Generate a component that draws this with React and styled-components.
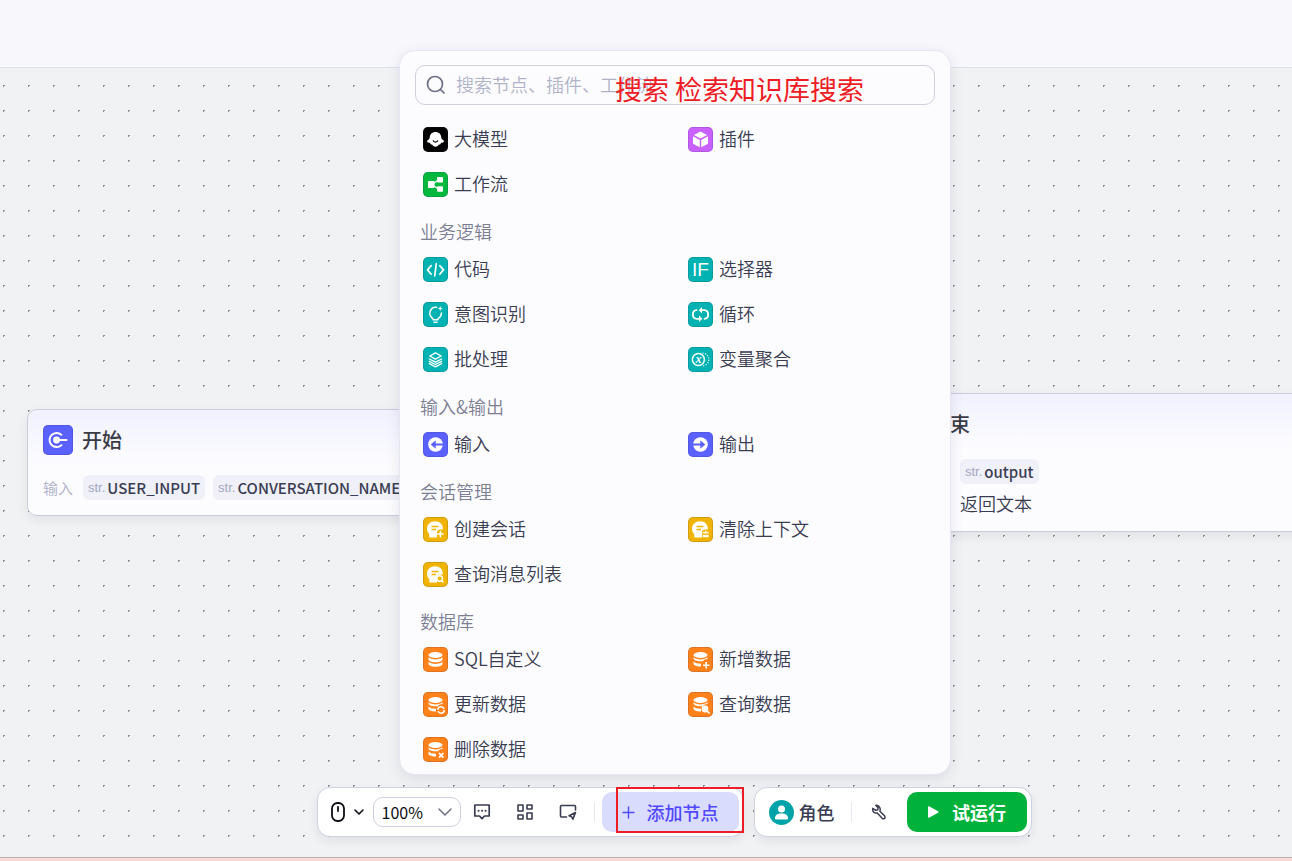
import React from 'react';
import styled, { createGlobalStyle } from 'styled-components';

const GlobalStyle = createGlobalStyle`
  * {
    box-sizing: border-box;
  }

  body {
    margin: 0;
    font-family: 'Noto Sans CJK SC', 'Noto Sans', sans-serif;
    color: #3a3d52;
  }

  button,
  input,
  select {
    font: inherit;
    color: inherit;
  }

  button {
    border: none;
    background: none;
    padding: 0;
    cursor: pointer;
  }
`;

const Page = styled.div`
  display: flex;
  flex-direction: column;
  min-height: 100vh;
`;

const Header = styled.header`
  height: 68px;
  background: #f7f7fc;
  border-bottom: 1px solid #dfe0ea;
`;

const Workspace = styled.main`
  position: relative;
  display: flex;
  flex: 1;
`;

const Canvas = styled.section`
  position: relative;
  flex: 1;
  overflow: hidden;
  background-color: #f1f2f4;
  background-image: radial-gradient(circle, #8c8f99 1px, transparent 1px);
  background-size: 25px 25px;
  background-position: -9px 5px;
`;

const BottomStrip = styled.footer`
  height: 4px;
  background: #f9d9d5;
  border-top: 1px solid #b9b3b5;
`;

const NodeCard = styled.article`
  position: absolute;
  left: ${(props) => props.$x}px;
  top: ${(props) => props.$y}px;
  width: 560px;
  padding: 15px;
  border: 1px solid #cbcddd;
  border-radius: 10px;
  background: linear-gradient(#f1f1ff, #fcfcff 54px);
  box-shadow: 0 4px 12px rgba(30, 35, 60, 0.08);
`;

const NodeTitle = styled.div`
  display: flex;
  align-items: center;
  gap: 9px;
  height: 30px;
  margin-bottom: 20px;

  h3 {
    margin: 0;
    font-size: 20px;
    font-weight: 500;
    line-height: 30px;
    color: #3a3b46;
  }
`;

const NodeRow = styled.div`
  display: flex;
  align-items: center;
  gap: 8px;
  height: 25px;
  padding-left: ${(props) => (props.$indent ? '69px' : '0')};
`;

const NodeLabel = styled.span`
  width: 32px;
  font-size: 15px;
  color: #b3b5ca;
`;

const Tag = styled.span`
  display: flex;
  align-items: center;
  gap: 2px;
  height: 25px;
  padding: 0 5px;
  border-radius: 6px;
  background: #f0f0f8;
  font-size: 15px;
  font-weight: 500;
  white-space: nowrap;

  small {
    font-family: 'Liberation Sans', sans-serif;
    font-size: 13px;
    font-weight: 400;
    color: #a3a6c0;
  }
`;

const NodeText = styled.p`
  margin: 6px 0 0;
  padding-left: 69px;
  font-size: 18px;
  font-weight: 350;
  line-height: 26px;
`;

const Dock = styled.div`
  position: absolute;
  right: 0;
  bottom: 20px;
  left: 0;
  display: flex;
  flex-direction: column;
  align-items: center;
  gap: 12px;
  padding-left: 58px;
`;

const Popover = styled.div`
  width: 552px;
  padding: 14px 0 2px;
  border: 1px solid #e6e7f2;
  border-radius: 16px;
  background: #fcfcff;
  box-shadow: 0 4px 14px rgba(30, 35, 60, 0.1);
`;

const SearchBox = styled.label`
  position: relative;
  display: flex;
  align-items: center;
  gap: 10px;
  height: 40px;
  margin: 0 15px 12px;
  padding: 0 10px;
  border: 1px solid #cdd0df;
  border-radius: 10px;

  input {
    flex: 1;
    min-width: 0;
    padding: 0 0 2px;
    border: none;
    outline: none;
    background: transparent;
    font-size: 18px;
    font-weight: 350;
    line-height: 28px;
  }

  input::placeholder {
    color: #b0b3c8;
    opacity: 1;
  }
`;

const NoteText = styled.span`
  position: absolute;
  left: 199px;
  top: 3px;
  font-size: 27px;
  line-height: 40px;
  white-space: nowrap;
  color: #ee1c24;
  pointer-events: none;
`;

const NoteFrame = styled.span`
  position: absolute;
  top: -5px;
  right: -5px;
  bottom: -1px;
  left: 14px;
  border: 2px solid #ee1c24;
  pointer-events: none;
`;

const GroupTitle = styled.h4`
  margin: 0;
  padding: 10px 0 2px 20px;
  font-size: 18px;
  font-weight: 350;
  line-height: 28px;
  color: #7c7f94;
`;

const ItemGrid = styled.div`
  display: grid;
  grid-template-columns: 265px 1fr;
  padding-left: 20px;
`;

const Item = styled.button`
  display: flex;
  align-items: center;
  gap: 6px;
  height: 45px;
  padding-left: 3px;
  font-size: 18px;
  font-weight: 350;
  line-height: 28px;
`;

const ItemName = styled.span`
  padding-bottom: 3px;
`;

const IconTile = styled.span`
  display: flex;
  flex: none;
  width: ${(props) => props.$size || 25}px;
  height: ${(props) => props.$size || 25}px;
  border-radius: 5px;
  background: ${(props) => props.$color};
  box-shadow: inset 0 0 0 1px rgba(40, 40, 80, 0.16);
`;

const Toolbars = styled.div`
  display: flex;
  gap: 10px;
  padding-right: 2px;
`;

const Toolbar = styled.div`
  display: flex;
  align-items: center;
  height: 50px;
  padding: 4px;
  border: 1px solid #cfd1e3;
  border-radius: 13px;
  background: #fff;
  box-shadow: 0 4px 10px rgba(30, 35, 60, 0.08);
`;

const MouseButton = styled.button`
  display: flex;
  align-items: center;
  gap: 8px;
  width: 51px;
  height: 30px;
  padding-left: 9px;
  color: #0c0d14;
`;

const ZoomField = styled.span`
  display: grid;
  align-items: center;
  width: 88px;
  height: 30px;

  select,
  svg {
    grid-area: 1 / 1;
  }

  select {
    width: 100%;
    height: 30px;
    padding: 0 8px;
    border: 1px solid #cdd0e0;
    border-radius: 10px;
    appearance: none;
    background: #fff;
    font-size: 16px;
    color: #0c0d14;
  }

  svg {
    justify-self: end;
    margin-right: 8px;
    pointer-events: none;
  }
`;

const ToolButton = styled.button`
  display: flex;
  align-items: center;
  justify-content: center;
  width: ${(props) => props.$width || 43}px;
  height: 30px;
`;

const Divider = styled.span`
  width: 1px;
  height: 20px;
  margin: ${(props) => (props.$spaced ? '0 7px 0 4px' : '0')};
  background: #e8e9f2;
`;

const AddButton = styled.button`
  position: relative;
  display: flex;
  align-items: center;
  justify-content: center;
  gap: 12px;
  width: 137px;
  height: 40px;
  border-radius: 10px;
  background: #d9dcfc;
  font-size: 18px;
  font-weight: 500;
  color: #5147ff;
`;

const RoleButton = styled.button`
  display: flex;
  align-items: center;
  gap: 5px;
  width: 82px;
  height: 40px;
  margin-left: 10px;
  font-size: 18px;
  font-weight: 500;
`;

const RunButton = styled.button`
  display: flex;
  align-items: center;
  justify-content: center;
  gap: 13px;
  width: 120px;
  height: 40px;
  border-radius: 10px;
  background: #00b23c;
  font-size: 18px;
  font-weight: 700;
  color: #fff;
`;

const chatHead = (
  <path
    fill="#fff"
    d="M12 4.300c4.600 0 7.800 3 7.800 7v1.200h-2.600a3.200 3.200 0 0 0-3.200 3.200V20.500H6.300v-3.400C4.700 15.800 4 13.900 4 11.800 4 7.500 7.400 4.300 12 4.300z"
  />
);

const chatLines = <path d="M8.500 9.500h7M8.500 12.500h4.500" stroke="#f0b400" strokeWidth="1.300" />;

const fullStack = (
  <g fill="#fff">
    <ellipse cx="12.500" cy="8" rx="7" ry="3" />
    <path d="M5.500 10.300c1.500 1.500 4 2.100 7 2.100s5.500-.6 7-2.100v1.900c0 1.700-3.100 3-7 3s-7-1.300-7-3z" />
    <path d="M5.500 14.800c1.500 1.500 4 2.100 7 2.100s5.500-.6 7-2.100v2c0 1.700-3.100 3-7 3s-7-1.300-7-3z" />
  </g>
);

const partStack = (
  <g fill="#fff">
    <ellipse cx="12.500" cy="8" rx="7" ry="3" />
    <path d="M5.500 10.300c1.500 1.500 4 2.100 7 2.100s5.500-.6 7-2.100v1.700c-2 0-3.500.8-4.600 2.200-.8.100-1.600.1-2.400.1-3.900 0-7-1.300-7-3z" />
    <path d="M5.500 14.500c1.500 1.500 4 2.200 7.500 2.200v2.800c-4.300.1-7.500-1.200-7.500-2.800z" />
  </g>
);

const glyphs = {
  llm: (
    <>
      <path
        fill="#fff"
        d="M12.500 5c3.500 0 5.700 2.200 5.900 6.200.1 1 2.500 1.700 2.500 3 0 1.200-1.300 1.500-2.800 1.500-.3 1.300-1 1.900-2.200 1.900-.5 1.200-1.700 2.100-3.400 2.100s-2.900-.9-3.400-2.100c-1.200 0-1.900-.6-2.200-1.900-1.500 0-2.800-.3-2.800-1.500 0-1.300 2.400-2 2.500-3C6.800 7.200 9 5 12.500 5z"
      />
      <path d="M10 13.400c.7 2.300 4.300 2.300 5 0" fill="none" stroke="#000" strokeWidth="1.100" />
    </>
  ),
  plugin: (
    <g fill="#fff">
      <path d="M12.500 4.600l6.600 3.300-6.600 3.600-6.600-3.600z" />
      <path d="M5 9.300l6.800 3.700v7.300L5.900 17.300a1.500 1.500 0 0 1-.9-1.400z" />
      <path d="M20 9.300L13.200 13v7.300l5.900-3a1.500 1.500 0 0 0 .9-1.400z" />
    </g>
  ),
  workflow: (
    <>
      <path d="M9 12.500l7-5M9 12.500l7 5" stroke="#fff" strokeWidth="1.300" />
      <rect x="5" y="9" width="6.500" height="7" rx="1" fill="#fff" />
      <rect x="14" y="5" width="6" height="5.500" rx="1" fill="#fff" />
      <rect x="14" y="14.200" width="6" height="5.500" rx="1" fill="#fff" />
    </>
  ),
  code: (
    <path
      d="M8.200 8.600L4.500 12.900l3.700 4.300M16.800 8.600l3.700 4.300-3.700 4.300M13.300 6.500l-1.600 12.500"
      fill="none"
      stroke="#fff"
      strokeWidth="1.700"
      strokeLinecap="round"
      strokeLinejoin="round"
    />
  ),
  condition: (
    <text
      x="12.500"
      y="19"
      textAnchor="middle"
      fontFamily="Liberation Sans"
      fontWeight="400"
      fontSize="19"
      fill="#fff"
    >
      IF
    </text>
  ),
  intent: (
    <g fill="none" stroke="#fff" strokeWidth="1.500" strokeLinecap="round">
      <path d="M13.500 5.300A6 6 0 0 0 9.300 16.100c.7.700 1 1.100 1 1.700h4.400c0-.6.300-1 1-1.700A6 6 0 0 0 18.400 11" />
      <path d="M11 20.300h3" />
      <path d="M17.200 4l.7 1.800 1.800.7-1.800.7-.7 1.800-.7-1.800-1.800-.7 1.800-.7z" fill="#fff" stroke="none" />
    </g>
  ),
  loop: (
    <>
      <g fill="none" stroke="#fff" strokeWidth="1.800" strokeLinecap="round">
        <path d="M8.500 8.200C3.600 8.400 3.600 16.500 8.700 16.800H12" />
        <path d="M16.500 16.800c4.900-.2 4.900-8.300-.2-8.600H13" />
      </g>
      <path d="M14 5v6.400L10.700 8.200zM11 13.600V20l3.300-3.200z" fill="#fff" />
    </>
  ),
  batch: (
    <g fill="none" stroke="#fff" strokeWidth="1.400" strokeLinejoin="round" strokeLinecap="round">
      <path d="M12.500 5.800l5.700 3.200-5.700 3.200-5.700-3.200z" />
      <path d="M6.400 12l6.100 3.200 6.100-3.200M6.400 14.300l6.100 3.200 6.100-3.200M6.400 16.600l6.100 3.200 6.100-3.200" />
    </g>
  ),
  merge: (
    <>
      <circle cx="10.400" cy="12.500" r="6" fill="none" stroke="#fff" strokeWidth="1.500" />
      <path
        d="M14.500 6.200a6.300 6.300 0 0 1 0 12.600"
        fill="none"
        stroke="#fff"
        strokeWidth="1.300"
        strokeDasharray="1 1.500"
      />
      <text
        x="10.400"
        y="15.500"
        textAnchor="middle"
        fontFamily="Liberation Serif"
        fontStyle="italic"
        fontWeight="700"
        fontSize="12"
        fill="#fff"
      >
        x
      </text>
    </>
  ),
  input: (
    <>
      <circle cx="12.500" cy="12.500" r="7.300" fill="#fff" />
      <path d="M7.700 12.500l5-4.200v3.300H20v1.800h-7.300v3.300z" fill="#5b61ff" />
    </>
  ),
  output: (
    <>
      <circle cx="12.500" cy="12.500" r="7.300" fill="#fff" />
      <path d="M17.300 12.500l-5-4.200v3.300H5v1.800h7.300v3.300z" fill="#5b61ff" />
    </>
  ),
  chatAdd: (
    <>
      {chatHead}
      {chatLines}
      <path d="M17.400 13.800v6.600M14.100 17.100h6.600" stroke="#f0b400" strokeWidth="3.400" />
      <path d="M17.400 13.800v6.600M14.100 17.100h6.600" stroke="#fff" strokeWidth="1.500" />
    </>
  ),
  chatClear: (
    <>
      {chatHead}
      {chatLines}
      <path d="M17 12.800h1.500v2H21v2h-6.600v-2H17zM14.400 17.600H21v3h-6.600z" fill="#fff" stroke="#f0b400" strokeWidth=".6" />
    </>
  ),
  chatSearch: (
    <>
      {chatHead}
      {chatLines}
      <circle cx="16.700" cy="16.500" r="2.800" fill="#f0b400" stroke="#fff" strokeWidth="1.400" />
      <path d="M18.800 18.700l1.700 1.700" stroke="#fff" strokeWidth="1.500" />
    </>
  ),
  db: fullStack,
  dbAdd: (
    <>
      {partStack}
      <path d="M18.200 15v6.500M15 18.200h6.500" stroke="#fff" strokeWidth="1.600" />
    </>
  ),
  dbUpdate: (
    <>
      {partStack}
      <circle
        cx="18"
        cy="18"
        r="3.200"
        fill="#ff811a"
        stroke="#fff"
        strokeWidth="1.500"
        strokeDasharray="8.500 1.500"
      />
    </>
  ),
  dbSearch: (
    <>
      {partStack}
      <circle cx="17" cy="17" r="3.400" fill="#fff" />
      <path d="M19 19l2 2" stroke="#fff" strokeWidth="1.700" strokeLinecap="round" />
    </>
  ),
  dbDelete: (
    <>
      {partStack}
      <path d="M16 16l4.400 4.600M20.400 16L16 20.600" stroke="#fff" strokeWidth="1.700" />
    </>
  ),
  start: (
    <>
      <path
        d="M15.400 8.200a5.900 5.900 0 1 0 0 8.600"
        fill="none"
        stroke="#fff"
        strokeWidth="1.600"
        strokeLinecap="round"
      />
      <circle cx="11.300" cy="12.500" r="2.900" fill="#fff" />
      <path d="M12 12.500h7.700" stroke="#fff" strokeWidth="1.500" strokeLinecap="round" />
    </>
  ),
};

const TEAL = '#00b2b2';
const INDIGO = '#5b61ff';
const YELLOW = '#f0b400';
const ORANGE = '#ff811a';

const groups = [
  {
    items: [
      { name: '大模型', icon: 'llm', color: '#000' },
      { name: '插件', icon: 'plugin', color: '#ca61ff' },
      { name: '工作流', icon: 'workflow', color: '#00b83e' },
    ],
  },
  {
    title: '业务逻辑',
    items: [
      { name: '代码', icon: 'code', color: TEAL },
      { name: '选择器', icon: 'condition', color: TEAL },
      { name: '意图识别', icon: 'intent', color: TEAL },
      { name: '循环', icon: 'loop', color: TEAL },
      { name: '批处理', icon: 'batch', color: TEAL },
      { name: '变量聚合', icon: 'merge', color: TEAL },
    ],
  },
  {
    title: '输入&输出',
    items: [
      { name: '输入', icon: 'input', color: INDIGO },
      { name: '输出', icon: 'output', color: INDIGO },
    ],
  },
  {
    title: '会话管理',
    items: [
      { name: '创建会话', icon: 'chatAdd', color: YELLOW },
      { name: '清除上下文', icon: 'chatClear', color: YELLOW },
      { name: '查询消息列表', icon: 'chatSearch', color: YELLOW },
    ],
  },
  {
    title: '数据库',
    items: [
      { name: 'SQL自定义', icon: 'db', color: ORANGE },
      { name: '新增数据', icon: 'dbAdd', color: ORANGE },
      { name: '更新数据', icon: 'dbUpdate', color: ORANGE },
      { name: '查询数据', icon: 'dbSearch', color: ORANGE },
      { name: '删除数据', icon: 'dbDelete', color: ORANGE },
    ],
  },
];

function NodeIcon({ icon, color, size }) {
  return (
    <IconTile $color={color} $size={size}>
      <svg viewBox="0 0 25 25" width="100%" height="100%" aria-hidden="true">
        {glyphs[icon]}
      </svg>
    </IconTile>
  );
}

function LineIcon({ width = 18, height = 18, color = '#3a3d52', stroke = 1.5, children }) {
  return (
    <svg
      width={width}
      height={height}
      viewBox={`0 0 ${width} ${height}`}
      fill="none"
      stroke={color}
      strokeWidth={stroke}
      strokeLinecap="round"
      strokeLinejoin="round"
      aria-hidden="true"
    >
      {children}
    </svg>
  );
}

function Variable({ name }) {
  return (
    <Tag>
      <small>str.</small>
      {name}
    </Tag>
  );
}

function NodePanel() {
  return (
    <Popover>
      <SearchBox>
        <LineIcon width={20} height={20} color="#6d7088" stroke={1.7}>
          <circle cx="9" cy="9" r="7.500" />
          <path d="M14.500 14.500l3.500 3.500" />
        </LineIcon>
        <input type="text" aria-label="搜索" placeholder="搜索节点、插件、工作流" />
        <NoteText>搜索 检索知识库搜索</NoteText>
      </SearchBox>
      {groups.map((group, index) => (
        <section key={index}>
          {group.title && <GroupTitle>{group.title}</GroupTitle>}
          <ItemGrid>
            {group.items.map((item) => (
              <Item type="button" key={item.name}>
                <NodeIcon icon={item.icon} color={item.color} />
                <ItemName>{item.name}</ItemName>
              </Item>
            ))}
          </ItemGrid>
        </section>
      ))}
    </Popover>
  );
}

function EditToolbar() {
  return (
    <Toolbar>
      <MouseButton type="button" aria-label="鼠标模式">
        <LineIcon width={14} height={20} color="#0c0d14" stroke={1.8}>
          <rect x="1" y="1" width="12" height="18" rx="5.500" />
          <path d="M7 5v4" />
        </LineIcon>
        <LineIcon width={12} height={8} color="#0c0d14" stroke={1.6}>
          <path d="M2 2l4 4 4-4" />
        </LineIcon>
      </MouseButton>
      <ZoomField>
        <select aria-label="缩放" defaultValue="100%">
          <option>100%</option>
        </select>
        <LineIcon width={16} height={10} color="#6d7088">
          <path d="M2 2l6 6 6-6" />
        </LineIcon>
      </ZoomField>
      <ToolButton type="button" aria-label="注释">
        <LineIcon stroke={1.7}>
          <path d="M1.800 2h14.400v11h-4.700L9 15.600 6.500 13H1.800z" />
          <path d="M5.500 7.700h.1M9 7.700h.1M12.500 7.700h.1" strokeWidth="2" />
        </LineIcon>
      </ToolButton>
      <ToolButton type="button" aria-label="优化布局">
        <LineIcon stroke={1.6}>
          <path d="M2 2h5v6H2zM11 2h5v4h-5zM2 12h5v4H2zM11 10h5v6h-5z" />
        </LineIcon>
      </ToolButton>
      <ToolButton type="button" aria-label="缩略图">
        <LineIcon stroke={1.6}>
          <path d="M7.500 14H2.500a1 1 0 0 1-1-1V3.500a1 1 0 0 1 1-1h13a1 1 0 0 1 1 1V7" />
          <path d="M16.500 9.500l-6.500 3.200 2.600 1 1.300 2.500z" />
        </LineIcon>
      </ToolButton>
      <Divider $spaced />
      <AddButton type="button">
        <LineIcon width={13} height={13} color="#5147ff" stroke={1.4}>
          <path d="M6.500 1v11M1 6.500h11" />
        </LineIcon>
        添加节点
        <NoteFrame />
      </AddButton>
    </Toolbar>
  );
}

function RunToolbar() {
  return (
    <Toolbar>
      <RoleButton type="button">
        <svg width="25" height="25" viewBox="0 0 25 25" aria-hidden="true">
          <circle cx="12.500" cy="12.500" r="12.500" fill="#00a3a8" />
          <circle cx="12.500" cy="9" r="3.500" fill="#fff" />
          <path d="M6 18.500c0-3.400 2-5 6.500-5s6.500 1.600 6.500 5c0 .6-.4 1-1 1H7c-.6 0-1-.4-1-1z" fill="#fff" />
        </svg>
        角色
      </RoleButton>
      <Divider />
      <ToolButton type="button" $width={55} aria-label="调试">
        <LineIcon width={16} height={16}>
          <path d="M4.800 1.300l2.300 2.500-.4 2-2 .5-2.900-1.900c-.7 2.700 1.200 5.200 4.400 4.600l5 5.300c1.700 1.300 3.600-.5 2.500-2.200L8.900 7.200C10 3.700 7.800 1 4.800 1.300z" />
        </LineIcon>
      </ToolButton>
      <RunButton type="button">
        <svg width="12" height="12" viewBox="0 0 12 12" aria-hidden="true">
          <path d="M1 1.200C1 .4 1.800 0 2.500.4l8.500 4.800c.7.400.7 1.200 0 1.600l-8.500 4.800c-.7.400-1.500 0-1.500-.8z" fill="#fff" />
        </svg>
        试运行
      </RunButton>
    </Toolbar>
  );
}

function App() {
  return (
    <Page>
      <GlobalStyle />
      <Header />
      <Workspace>
        <Canvas>
          <NodeCard $x={27} $y={341}>
            <NodeTitle>
              <NodeIcon icon="start" color={INDIGO} size={30} />
              <h3>开始</h3>
            </NodeTitle>
            <NodeRow>
              <NodeLabel>输入</NodeLabel>
              <Variable name="USER_INPUT" />
              <Variable name="CONVERSATION_NAME" />
            </NodeRow>
          </NodeCard>
          <NodeCard $x={875} $y={325}>
            <NodeTitle>
              <NodeIcon icon="start" color={INDIGO} size={30} />
              <h3>结束</h3>
            </NodeTitle>
            <NodeRow $indent>
              <Variable name="output" />
            </NodeRow>
            <NodeText>返回文本</NodeText>
          </NodeCard>
        </Canvas>
        <Dock>
          <NodePanel />
          <Toolbars>
            <EditToolbar />
            <RunToolbar />
          </Toolbars>
        </Dock>
      </Workspace>
      <BottomStrip />
    </Page>
  );
}

export default App;
